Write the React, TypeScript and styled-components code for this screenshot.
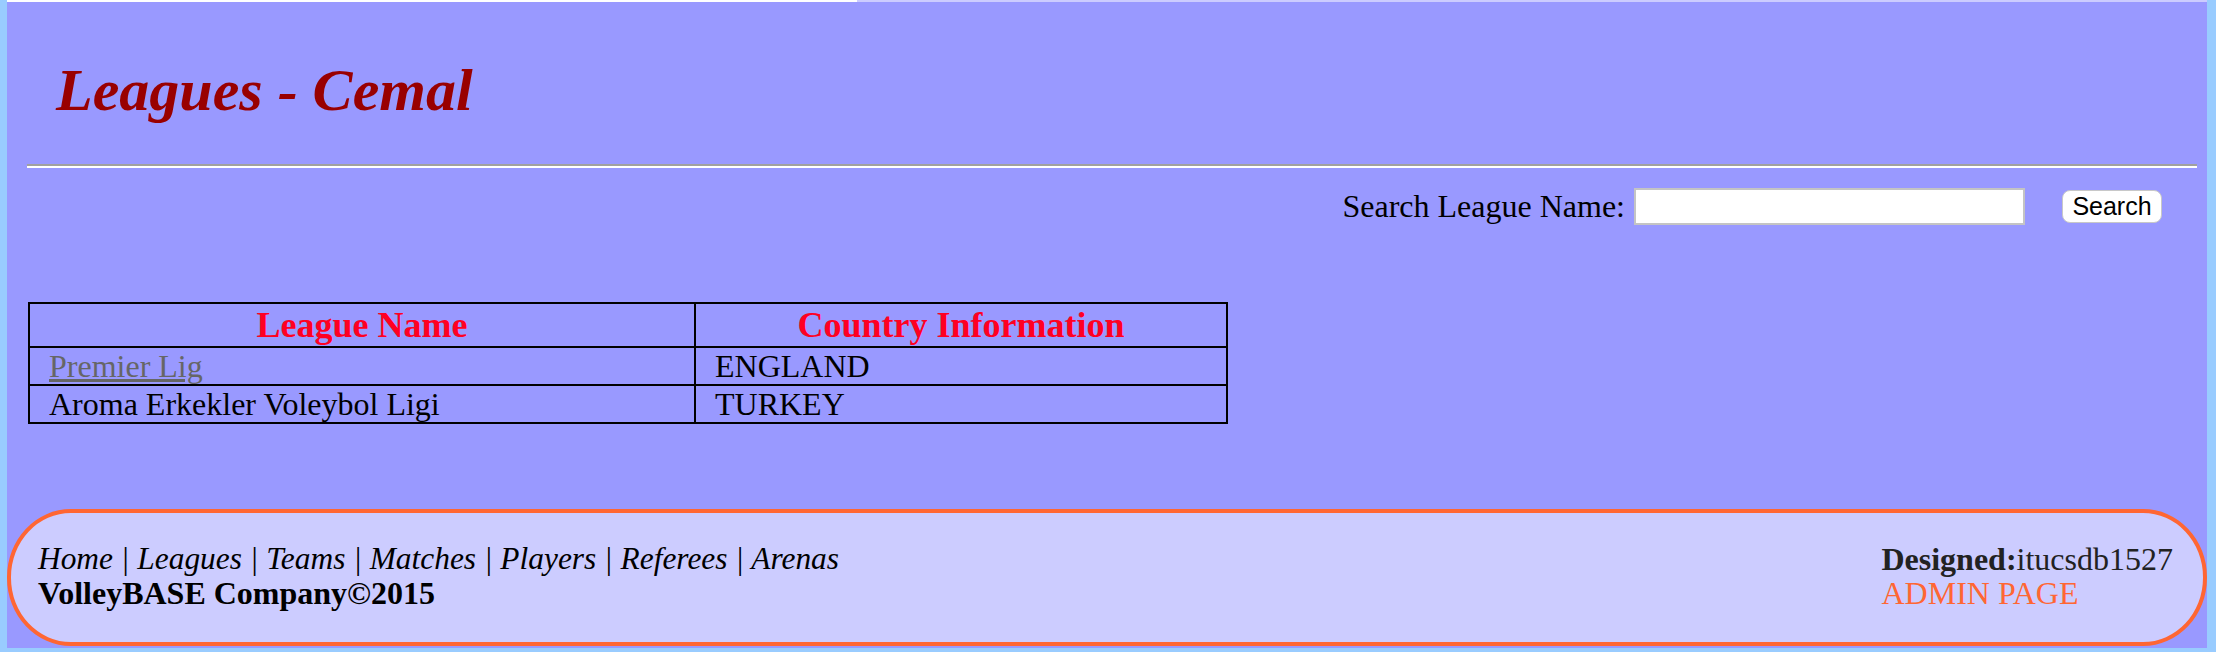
import React from 'react'
import styled, { createGlobalStyle } from 'styled-components'

const GlobalStyle = createGlobalStyle`
  html, body {
    margin: 0;
    padding: 0;
    background: #99ccff;
    font-family: 'Liberation Serif', 'Times New Roman', serif;
  }
`

const Page = styled.div`
  margin-left: 7px;
  width: 2200px;
  background: #9999ff;
  padding-bottom: 2px;
`

const TopStrip = styled.div`
  display: flex;
  height: 2px;
`

const StripPiece = styled.div<{ $tone: string; $width?: number }>`
  background: ${(p) => p.$tone};
  ${(p) => (p.$width ? `width: ${p.$width}px;` : 'flex: 1;')}
`

const Header = styled.header`
  padding: 53px 0 0 49px;
`

const Title = styled.h1`
  margin: 0;
  font-size: 60px;
  line-height: 70px;
  font-weight: bold;
  font-style: italic;
  color: #990000;
`

const Rule = styled.hr`
  margin: 39px 10px 0 20px;
  height: 0;
  border: none;
  border-top: 2px solid #a0a0a0;
  border-bottom: 2px solid #ffffff;
`

const SearchBar = styled.form`
  display: flex;
  justify-content: flex-end;
  align-items: center;
  margin-top: 20px;
  padding-right: 45px;
  height: 37px;
`

const SearchLabel = styled.label`
  font-size: 32px;
  color: #000;
  margin-right: 9px;
`

const SearchInput = styled.input`
  box-sizing: border-box;
  width: 391px;
  height: 37px;
  border: 2px solid #c4c4c4;
  background: #fff;
  outline: none;
`

const SearchButton = styled.button`
  box-sizing: border-box;
  margin-left: 37px;
  width: 100px;
  height: 33px;
  background: #fff;
  border: 1px solid #c8c8c8;
  border-radius: 8px;
  font-family: 'Liberation Sans', Arial, sans-serif;
  font-size: 25px;
  color: #000;
  padding: 0;
`

const Table = styled.table`
  margin: 77px 0 0 21px;
  width: 1200px;
  border-collapse: collapse;
  border: 2px solid #000;
  table-layout: fixed;
`

const HeadCell = styled.th<{ $width?: number }>`
  ${(p) => (p.$width ? `width: ${p.$width}px;` : '')}
  border: 2px solid #000;
  padding: 0;
  height: 42px;
  line-height: 42px;
  font-size: 36px;
  font-weight: bold;
  color: #ff0022;
  text-align: center;
`

const Cell = styled.td`
  border: 2px solid #000;
  padding: 0 0 0 19px;
  height: 36px;
  line-height: 36px;
  font-size: 32px;
  color: #000;
  white-space: nowrap;
`

const LeagueLink = styled.a`
  color: #666666;
  text-decoration: underline;
`

const Footer = styled.footer`
  box-sizing: border-box;
  margin-top: 85px;
  height: 137px;
  display: flex;
  justify-content: space-between;
  align-items: center;
  padding: 0 30px 4px 27px;
  background: #ccccff;
  border: 4px solid #ff6633;
  border-radius: 64px / 68px;
`

const FooterBlock = styled.div`
  display: flex;
  flex-direction: column;
  font-size: 32px;
  line-height: 34px;
  color: #000;
`

const NavRow = styled.div`
  font-style: italic;
  font-size: 31.4px;
`

const NavLink = styled.a`
  color: #000;
  text-decoration: none;
`

const Company = styled.div`
  font-weight: bold;
`

const Designed = styled.div`
  color: #222;
`

const AdminLink = styled.a`
  color: #ff6633;
  text-decoration: none;
`

const navItems = ['Home', 'Leagues', 'Teams', 'Matches', 'Players', 'Referees', 'Arenas']

const leagues = [
  { name: 'Premier Lig', country: 'ENGLAND', link: true },
  { name: 'Aroma Erkekler Voleybol Ligi', country: 'TURKEY', link: false },
]

const App: React.FC = () => {
  return (
    <>
      <GlobalStyle />
      <Page>
        <TopStrip>
          <StripPiece $tone="#ffffff" $width={850} />
          <StripPiece $tone="#ccccff" />
        </TopStrip>
        <Header>
          <Title>Leagues - Cemal</Title>
        </Header>
        <Rule />
        <SearchBar onSubmit={(e) => e.preventDefault()}>
          <SearchLabel htmlFor="league-search">Search League Name:</SearchLabel>
          <SearchInput id="league-search" type="text" />
          <SearchButton type="submit">Search</SearchButton>
        </SearchBar>

        <Table>
          <thead>
            <tr>
              <HeadCell $width={664}>League Name</HeadCell>
              <HeadCell>Country Information</HeadCell>
            </tr>
          </thead>
          <tbody>
            {leagues.map((l) => (
              <tr key={l.name}>
                <Cell>{l.link ? <LeagueLink href="#">{l.name}</LeagueLink> : l.name}</Cell>
                <Cell>{l.country}</Cell>
              </tr>
            ))}
          </tbody>
        </Table>

        <Footer>
          <FooterBlock>
            <NavRow>
              {navItems.map((item, i) => (
                <React.Fragment key={item}>
                  {i > 0 && ' | '}
                  <NavLink href="#">{item}</NavLink>
                </React.Fragment>
              ))}
            </NavRow>
            <Company>VolleyBASE Company©2015</Company>
          </FooterBlock>
          <FooterBlock>
            <Designed>
              <b>Designed:</b>itucsdb1527
            </Designed>
            <AdminLink href="#">ADMIN PAGE</AdminLink>
          </FooterBlock>
        </Footer>
      </Page>
    </>
  )
}

export default App
